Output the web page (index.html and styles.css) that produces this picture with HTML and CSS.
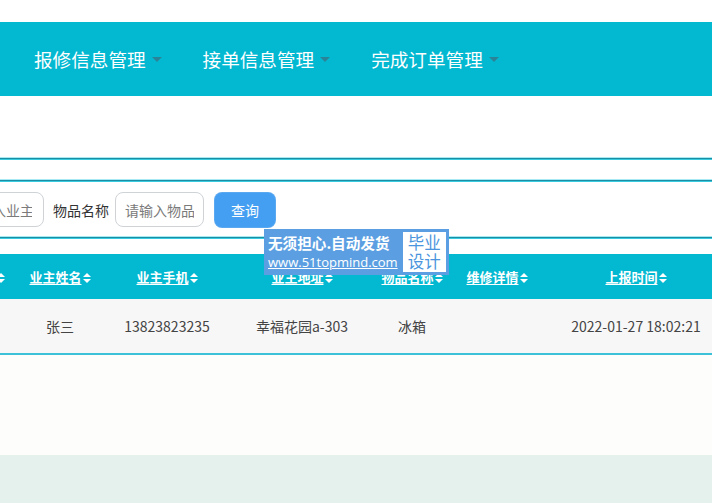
FILE: index.html
```html
<!DOCTYPE html>
<html lang="zh">
<head>
<meta charset="utf-8">
<link rel="stylesheet" href="styles.css">
</head>
<body>
<div class="page">
  <div class="top-gap"></div>
  <nav class="nav">
    <a class="nav-item">报修信息管理<span class="caret"></span></a>
    <a class="nav-item">接单信息管理<span class="caret"></span></a>
    <a class="nav-item">完成订单管理<span class="caret"></span></a>
  </nav>
  <div class="blank"></div>
  <div class="rule"></div>
  <div class="rule-gap"></div>
  <div class="rule"></div>
  <form class="search">
    <input class="field field-owner" placeholder="请输入业主">
    <label class="label">物品名称</label>
    <input class="field field-item" placeholder="请输入物品">
    <button type="button" class="btn">查询</button>
  </form>
  <div class="rule"></div>
  <div class="table-wrap">
    <div class="watermark">
      <div class="wm-left">
        <div class="wm-title">无须担心.自动发货</div>
        <div class="wm-url">www.51topmind.com</div>
      </div>
      <div class="wm-right">毕业<br>设计</div>
    </div>
    <table class="table">
      <colgroup>
        <col class="c0"><col class="c1"><col class="c2"><col class="c3"><col class="c4"><col class="c5"><col class="c6">
      </colgroup>
      <thead>
        <tr>
          <th><span class="sort"></span></th>
          <th><span class="th-text">业主姓名</span><span class="sort"></span></th>
          <th><span class="th-text">业主手机</span><span class="sort"></span></th>
          <th><span class="th-text">业主地址</span><span class="sort"></span></th>
          <th><span class="th-text">物品名称</span><span class="sort"></span></th>
          <th><span class="th-text">维修详情</span><span class="sort"></span></th>
          <th><span class="th-text">上报时间</span><span class="sort"></span></th>
        </tr>
      </thead>
      <tbody>
        <tr>
          <td></td>
          <td>张三</td>
          <td>13823823235</td>
          <td>幸福花园a-303</td>
          <td>冰箱</td>
          <td></td>
          <td>2022-01-27 18:02:21</td>
        </tr>
      </tbody>
    </table>
  </div>
  <div class="below"></div>
  <footer class="footer"></footer>
</div>
</body>
</html>
```
FILE: styles.css
```css
html, body {
  margin: 0;
  padding: 0;
  background: #ffffff;
  overflow: hidden;
}
body {
  font-family: "Noto Sans CJK SC", "Open Sans", "Liberation Sans", sans-serif;
  color: #333;
}
.page {
  width: 712px;
  height: 503px;
  display: flex;
  flex-direction: column;
  overflow: hidden;
}
.top-gap {
  height: 22px;
  flex: none;
}
.nav {
  height: 74px;
  flex: none;
  background: #03b8d1;
  display: flex;
  align-items: center;
  padding-left: 34px;
}
.nav-item {
  color: #ffffff;
  font-size: 18.6px;
  display: flex;
  align-items: center;
  margin-right: 41px;
  line-height: 1;
}
.caret {
  display: inline-block;
  width: 0;
  height: 0;
  margin-left: 6px;
  border-left: 5px solid transparent;
  border-right: 5px solid transparent;
  border-top: 5px solid #2a8397;
}
.blank {
  height: 62px;
  flex: none;
}
.rule {
  height: 1px;
  flex: none;
  background: #1c8ea4;
  box-shadow: 0 -1px 0 #a8eaf4, 0 1px 0 #38cbe0;
}
.rule-gap {
  height: 21px;
  flex: none;
}
.search {
  height: 56px;
  flex: none;
  display: flex;
  align-items: center;
  margin: 0;
  padding: 1px 0 0 0;
  box-sizing: border-box;
}
.field {
  height: 35px;
  box-sizing: border-box;
  border: 1px solid #cfd3d6;
  border-radius: 8px;
  font-family: inherit;
  font-size: 14px;
  padding: 0 9px;
  background: #fff;
  outline: none;
}
.field::placeholder {
  color: #7a7a7a;
}
.field-owner {
  width: 90px;
  margin-left: -46px;
  text-align: right;
  padding-right: 11px;
}
.label {
  font-size: 14px;
  color: #333;
  margin: 0 6px 0 9px;
}
.field-item {
  width: 89px;
}
.btn {
  margin-left: 11px;
  width: 60px;
  height: 34px;
  border: none;
  border-radius: 7px;
  background: #449ff2;
  color: #fff;
  font-family: inherit;
  font-size: 14px;
  box-shadow: 0 0 0 1px #5aa8f0;
}
.table-wrap {
  position: relative;
  margin-top: 16px;
  flex: none;
}
.table {
  border-collapse: collapse;
  table-layout: fixed;
  width: 740px;
  margin-left: -14px;
}
.c0 { width: 28px; }
.c1 { width: 92px; }
.c2 { width: 122px; }
.c3 { width: 148px; }
.c4 { width: 72px; }
.c5 { width: 98px; }
.c6 { width: 180px; }
.table th {
  background: #03b8d1;
  color: #fff;
  font-size: 13px;
  font-weight: bold;
  height: 45px;
  padding: 0;
  white-space: nowrap;
  text-align: center;
}
.th-text {
  text-decoration: underline;
  text-decoration-thickness: 1px;
  text-underline-offset: 2px;
}
.sort {
  display: inline-block;
  width: 8px;
  height: 10px;
  margin-left: 1px;
  vertical-align: -1px;
  position: relative;
}
.sort::before, .sort::after {
  content: "";
  position: absolute;
  left: 0;
  border-left: 4px solid transparent;
  border-right: 4px solid transparent;
}
.sort::before {
  top: 0;
  border-bottom: 4px solid #fff;
}
.sort::after {
  bottom: 0;
  border-top: 4px solid #fff;
}
.table td {
  background: #f7f7f7;
  height: 54px;
  padding: 0;
  font-size: 14px;
  color: #444;
  text-align: center;
  border-bottom: 2px solid #3cc2d8;
  white-space: nowrap;
}
.watermark {
  position: absolute;
  left: 264px;
  top: -25px;
  z-index: 2;
  display: flex;
  background: #5b9fe2;
  padding: 2px 2px 2px 4px;
  align-items: stretch;
}
.wm-left {
  display: flex;
  flex-direction: column;
  justify-content: center;
  padding-right: 4px;
}
.wm-title {
  color: #fff;
  font-size: 14.6px;
  font-weight: bold;
  line-height: 20px;
  white-space: nowrap;
}
.wm-url {
  color: #fff;
  font-family: "Open Sans", "Liberation Sans", sans-serif;
  font-size: 13px;
  text-decoration: underline;
  line-height: 18px;
  white-space: nowrap;
}
.wm-right {
  background: #fff;
  color: #4a95dd;
  font-size: 16.5px;
  line-height: 19px;
  padding: 1px 5px;
  border: 1px solid #5b9fe2;
}
.below {
  flex: 1;
  background: #fdfdfb;
}
.footer {
  height: 48px;
  flex: none;
  background: #e5f1ec;
}
```
